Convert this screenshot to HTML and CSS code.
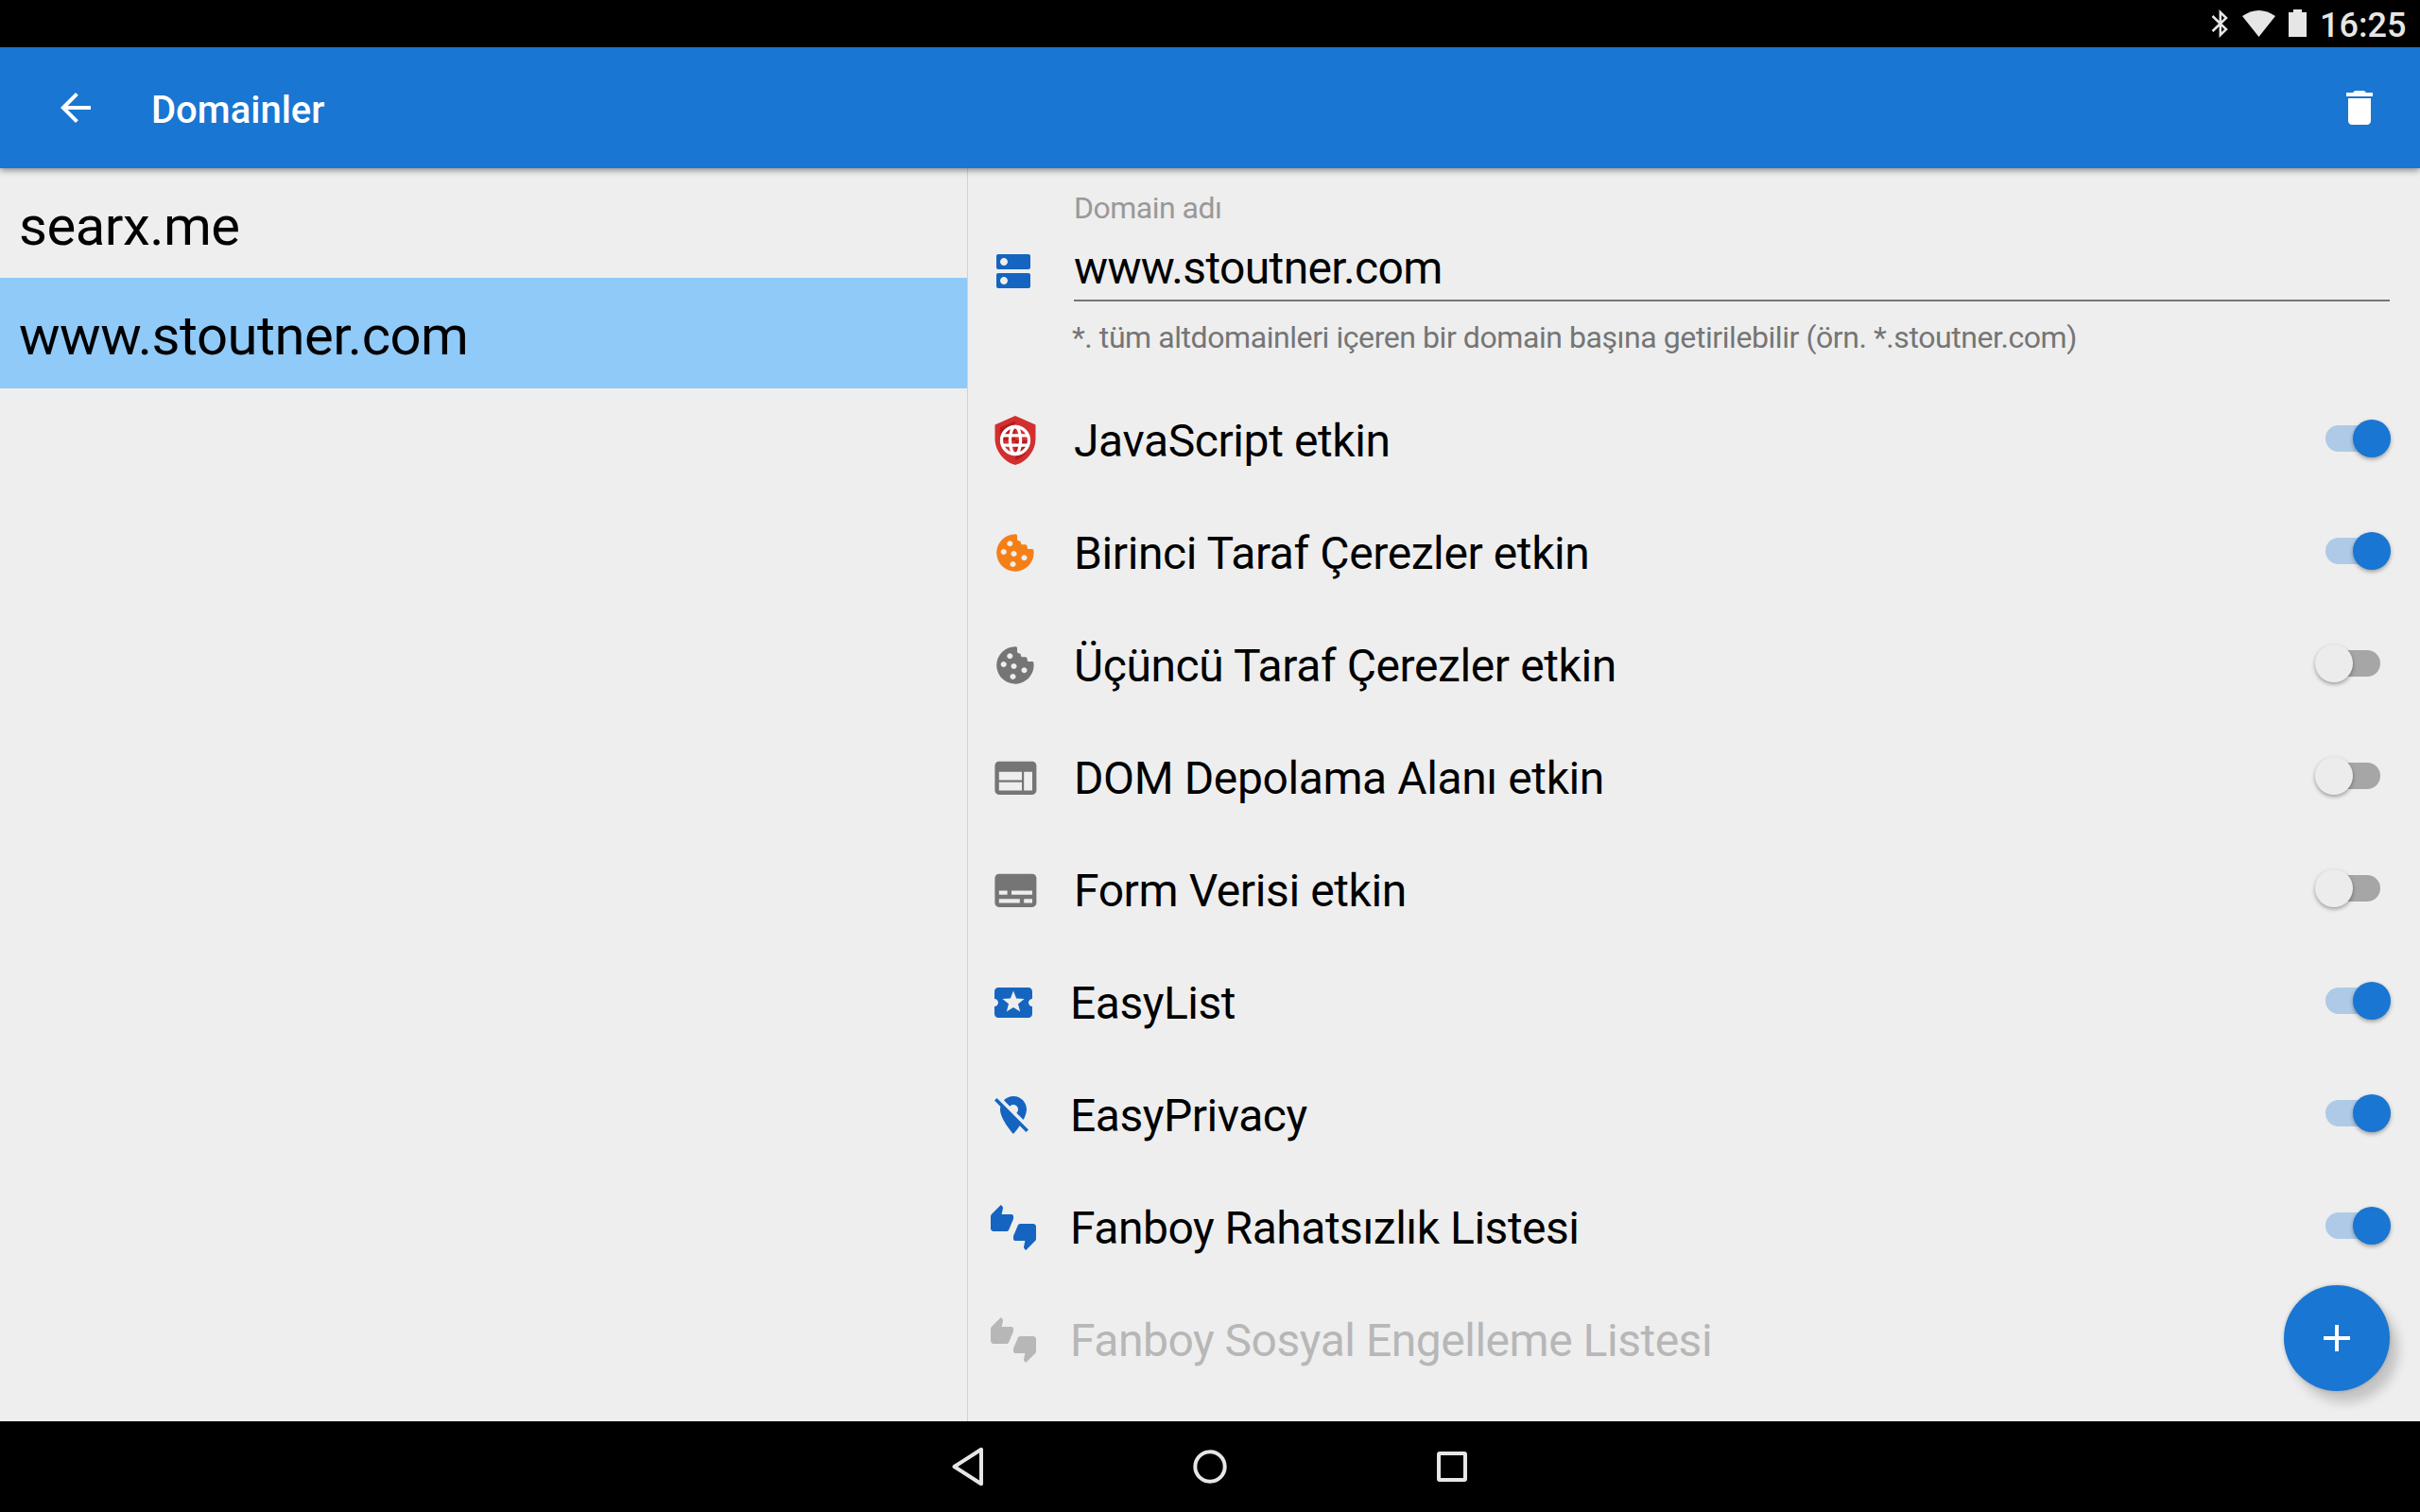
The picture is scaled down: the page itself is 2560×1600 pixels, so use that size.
FILE: index.html
```html
<!DOCTYPE html>
<html lang="tr">
<head>
<meta charset="utf-8">
<title>Domainler</title>
<link rel="stylesheet" href="styles.css">
</head>
<body>
<svg class="defs" width="0" height="0">
  <symbol id="thumbs" viewBox="0 0 24 24"><path d="M12 6c0-.55-.45-1-1-1H5.82l.66-3.18.02-.23c0-.31-.13-.59-.33-.8L5.38 0 .44 4.94C.17 5.21 0 5.59 0 6v6.5c0 .83.67 1.5 1.5 1.5h6.75c.62 0 1.15-.38 1.38-.91l2.26-5.29c.07-.17.11-.36.11-.55V6zm10.5 4h-6.75c-.62 0-1.15.38-1.38.91l-2.26 5.29c-.07.17-.11.36-.11.55V18c0 .55.45 1 1 1h5.18l-.66 3.18-.02.24c0 .31.13.59.33.8l.79.78 4.94-4.94c.27-.27.44-.65.44-1.06v-6.5c0-.83-.67-1.5-1.5-1.5z"/></symbol>
  <symbol id="cookie" viewBox="0 0 40 40"><path fill-rule="evenodd" d="M20 .3C20.700 .3 22 .6 22 1.500V5.500Q22 7.300 23.600 7.300Q26 7.300 26 9.500V10Q26 11.300 27.500 11.300H30.500Q32.700 11.300 32.700 13.500V14.500Q32.700 16 34.200 16H38Q39.500 16 39.500 18A19.700 19.700 0 1 1 20 .3ZM14.300 7.300a3 3 0 1 0 .01 0ZM7.700 16a3 3 0 1 0 .01 0ZM18.500 18a3 3 0 1 0 .01 0ZM29.500 22.300a3 3 0 1 0 .01 0ZM17.500 29a3 3 0 1 0 .01 0Z"/></symbol>
</svg>
<header class="status">
  <svg class="bt" viewBox="0 0 18 30"><path d="M1.500 7 16 21 9.800 27V3L16 9 1.500 23" fill="none" stroke="currentColor" stroke-width="2.500"/></svg>
  <svg class="wifi" viewBox="0 0 35 28"><path d="M0 6Q17.500-6 35 6L17.500 28Z" fill="currentColor"/></svg>
  <svg class="battery" viewBox="0 0 19 29"><path d="M5 0h9v3h5v26H0V3h5Z" fill="currentColor"/></svg>
  <span class="clock">16:25</span>
</header>
<nav class="toolbar">
  <svg class="back" viewBox="0 0 24 24"><path fill="#fff" d="M20 11H7.830l5.590-5.590L12 4l-8 8 8 8 1.410-1.410L7.830 13H20v-2z"/></svg>
  <h1 class="title">Domainler</h1>
  <svg class="trash" viewBox="0 0 24 24"><path fill="#fff" d="M6 19c0 1.100.9 2 2 2h8c1.100 0 2-.9 2-2V7H6v12zM19 4h-3.500l-1-1h-5l-1 1H5v2h14V4z"/></svg>
</nav>
<main class="panes">
  <ul class="domains">
    <li class="domain"><span>searx.me</span></li>
    <li class="domain selected"><span>www.stoutner.com</span></li>
  </ul>
  <section class="settings">
    <div class="name">
      <svg class="name-icon blue" viewBox="0 0 24 24"><path d="M20 13H4c-.55 0-1 .45-1 1v6c0 .55.45 1 1 1h16c.55 0 1-.45 1-1v-6c0-.55-.45-1-1-1zM7 19c-1.100 0-2-.9-2-2s.9-2 2-2 2 .9 2 2-.9 2-2 2zM20 3H4c-.55 0-1 .45-1 1v6c0 .55.45 1 1 1h16c.55 0 1-.45 1-1V4c0-.55-.45-1-1-1zM7 9c-1.100 0-2-.9-2-2s.9-2 2-2 2 .9 2 2-.9 2-2 2z"/></svg>
      <div class="field">
        <div class="label">Domain adı</div>
        <div class="value">www.stoutner.com</div>
        <div class="hint">*. tüm altdomainleri içeren bir domain başına getirilebilir (örn. *.stoutner.com)</div>
      </div>
    </div>
    <div class="row wide"><span class="icon"><svg class="shield" viewBox="0 0 44 52"><path fill="#d32f2f" d="M22 0 43.500 9.500V24C43.500 37 34 49 22 52 10 49 .5 37 .5 24V9.500Z"/><path fill="#b71c1c" d="M22 5.500V26H5.800V12.500ZM22 26H38.300C37.500 36 31 44.500 22 47Z"/><g fill="none" stroke="#fff" stroke-width="3.300"><circle cx="22" cy="26" r="14.500"/><ellipse cx="22" cy="26" rx="5.600" ry="14.500"/><path d="M9 20.800h26M9 31.200h26"/></g></svg></span><span class="text">JavaScript etkin</span><i class="switch on"></i></div>
    <div class="row wide"><span class="icon orange"><svg class="cookie"><use href="#cookie"/></svg></span><span class="text">Birinci Taraf Çerezler etkin</span><i class="switch on"></i></div>
    <div class="row wide"><span class="icon gray"><svg class="cookie"><use href="#cookie"/></svg></span><span class="text">Üçüncü Taraf Çerezler etkin</span><i class="switch"></i></div>
    <div class="row wide"><span class="icon gray"><svg class="big" viewBox="0 0 24 24"><path d="M20 4H4c-1.100 0-1.990.9-1.990 2L2 18c0 1.100.9 2 2 2h16c1.100 0 2-.9 2-2V6c0-1.100-.9-2-2-2zm-5 14H4v-4h11v4zm0-5H4V9h11v4zm5 5h-4V9h4v9z"/></svg></span><span class="text">DOM Depolama Alanı etkin</span><i class="switch"></i></div>
    <div class="row wide"><span class="icon gray"><svg class="big" viewBox="0 0 24 24"><path d="M20 4H4c-1.100 0-2 .9-2 2v12c0 1.100.9 2 2 2h16c1.100 0 2-.9 2-2V6c0-1.100-.9-2-2-2zM4 12h4v2H4v-2zm10 6H4v-2h10v2zm6 0h-4v-2h4v2zm0-4H10v-2h10v2z"/></svg></span><span class="text">Form Verisi etkin</span><i class="switch"></i></div>
    <div class="row"><span class="icon blue"><svg viewBox="0 0 24 24"><path d="M20 12c0-1.100.9-2 2-2V6c0-1.100-.9-2-2-2H4c-1.100 0-1.990.9-1.990 2v4c1.100 0 1.990.9 1.990 2s-.89 2-2 2v4c0 1.100.9 2 2 2h16c1.100 0 2-.9 2-2v-4c-1.100 0-2-.9-2-2zm-4.420 4.800L12 14.500l-3.580 2.300 1.080-4.120-3.290-2.690 4.240-.25L12 5.800l1.540 3.950 4.240.25-3.290 2.690 1.090 4.110z"/></svg></span><span class="text">EasyList</span><i class="switch on"></i></div>
    <div class="row"><span class="icon blue"><svg viewBox="0 0 24 24"><path d="M12 6.500c1.380 0 2.500 1.120 2.500 2.500 0 .74-.33 1.390-.83 1.850l3.630 3.630c.98-1.860 1.700-3.800 1.700-5.480 0-3.870-3.130-7-7-7-1.980 0-3.760.83-5.040 2.150l3.190 3.190c.46-.52 1.110-.84 1.850-.84zm4.370 9.600l-4.630-4.630-.11-.11L3.270 3 2 4.270l3.180 3.180C5.070 7.950 5 8.470 5 9c0 5.250 7 13 7 13s1.670-1.850 3.380-4.350L18.730 21 20 19.730l-3.630-3.630z"/></svg></span><span class="text">EasyPrivacy</span><i class="switch on"></i></div>
    <div class="row"><span class="icon blue"><svg><use href="#thumbs"/></svg></span><span class="text">Fanboy Rahatsızlık Listesi</span><i class="switch on"></i></div>
    <div class="row disabled"><span class="icon"><svg><use href="#thumbs"/></svg></span><span class="text">Fanboy Sosyal Engelleme Listesi</span></div>
  </section>
  <button class="fab" aria-label="Ekle"><svg viewBox="0 0 24 24"><path fill="#fff" d="M19 13h-6v6h-2v-6H5v-2h6V5h2v6h6v2z"/></svg></button>
</main>
<footer class="navbar">
  <svg viewBox="0 0 48 48"><path d="M9.500 24 38 5.800V42.200Z"/></svg>
  <svg viewBox="0 0 48 48"><circle cx="24" cy="24" r="15.700"/></svg>
  <svg viewBox="0 0 48 48"><rect x="10" y="10" width="28" height="28" rx="1"/></svg>
</footer>
</body>
</html>
```
FILE: styles.css
```css
* { box-sizing: border-box; }
body {
  margin: 0;
  width: 2560px;
  height: 1600px;
  overflow: hidden;
  display: flex;
  flex-direction: column;
  background: #eee;
  color: #000;
  font-family: Roboto, sans-serif;
}
svg { display: block; flex: none; fill: currentColor; }
.defs { position: absolute; }
.status {
  height: 50px;
  flex: none;
  background: #000;
  color: #e6e6e6;
  display: flex;
  align-items: flex-start;
  padding: 0 16px 0 2339px;
}
.bt { width: 18px; height: 30px; margin-top: 10px; }
.wifi { width: 35px; height: 28px; margin: 11px 0 0 15px; }
.battery { width: 19px; height: 29px; margin: 10px 0 0 14px; }
.clock { margin: 5px 0 0 14px; font-size: 36px; line-height: 44px; font-weight: 500; }
.toolbar {
  height: 128px;
  flex: none;
  display: flex;
  align-items: center;
  padding: 0 40px 0 56px;
  background: #1976d2;
  box-shadow: 0 2px 7px rgba(0, 0, 0, .45);
  z-index: 1;
}
.back { width: 48px; height: 48px; }
.title { margin: 6px auto 0 56px; color: #fff; font-size: 40px; line-height: 48px; font-weight: 500; }
.trash { width: 48px; height: 48px; }
.panes { position: relative; flex: 1; display: flex; min-height: 0; }
.domains { width: 1024px; margin: 0; padding: 0; list-style: none; border-right: 1px solid #d2d2d2; }
.domain { height: 116px; padding: 0 20px; width: 1023px; font-size: 58px; line-height: 123px; letter-spacing: -.5px; }
.selected { height: 117px; background: #90caf9; }
.settings { flex: 1; padding: 0 24px; }
.name { display: flex; height: 229px; }
.name-icon { width: 48px; height: 48px; margin-top: 85px; }
.field { flex: 1; margin: 24px 8px 0 40px; }
.label { font-size: 32px; line-height: 36px; letter-spacing: -.5px; color: #999; }
.value { height: 81px; padding-top: 15px; font-size: 48px; line-height: 62px; letter-spacing: -.65px; border-bottom: 2px solid #757575; }
.hint { margin: 18px 0 0 -2px; font-size: 32px; line-height: 40px; letter-spacing: -.43px; color: #757575; white-space: nowrap; }
.row { height: 119px; display: flex; align-items: center; padding-right: 6px; }
.icon { width: 48px; height: 48px; margin-bottom: 1px; display: flex; align-items: center; justify-content: center; }
.icon svg { width: 48px; height: 48px; }
.wide .icon { width: 52px; }
.icon .shield { width: 44px; height: 52px; }
.icon .cookie { width: 40px; height: 40px; }
.icon .big { width: 52.800px; height: 52.800px; }
.text { margin: 1px 0 0 36px; flex: 1; font-size: 48px; line-height: 56px; letter-spacing: -.48px; }
.wide .text { margin-left: 36px; letter-spacing: -.4px; }
.blue { color: #1565c0; }
.orange { color: #f57f17; }
.gray { color: #757575; }
.disabled { color: #b7b7b7; }
.switch { position: relative; width: 82px; height: 42px; margin-top: -5px; }
.switch::before { content: ""; position: absolute; left: 12px; top: 7px; width: 58px; height: 28px; border-radius: 14px; background: #a6a6a6; }
.switch::after { content: ""; position: absolute; left: 1px; top: 1px; width: 40px; height: 40px; border-radius: 50%; background: #ececec; box-shadow: 0 2px 4px rgba(0, 0, 0, .35); }
.on::before { background: #aecae7; }
.on::after { left: 41px; background: #1976d2; }
.fab {
  position: absolute;
  right: 32px;
  bottom: 32px;
  width: 112px;
  height: 112px;
  padding: 32px;
  border: 0;
  border-radius: 50%;
  background: #1976d2;
  box-shadow: 9px 12px 12px rgba(0, 0, 0, .18), 0 0 4px rgba(0, 0, 0, .2);
}
.navbar { height: 96px; flex: none; display: flex; justify-content: center; align-items: center; gap: 208px; background: #000; color: #e6e6e6; }
.navbar svg { width: 48px; height: 48px; fill: none; stroke: currentColor; stroke-width: 4; stroke-linejoin: round; }
```
